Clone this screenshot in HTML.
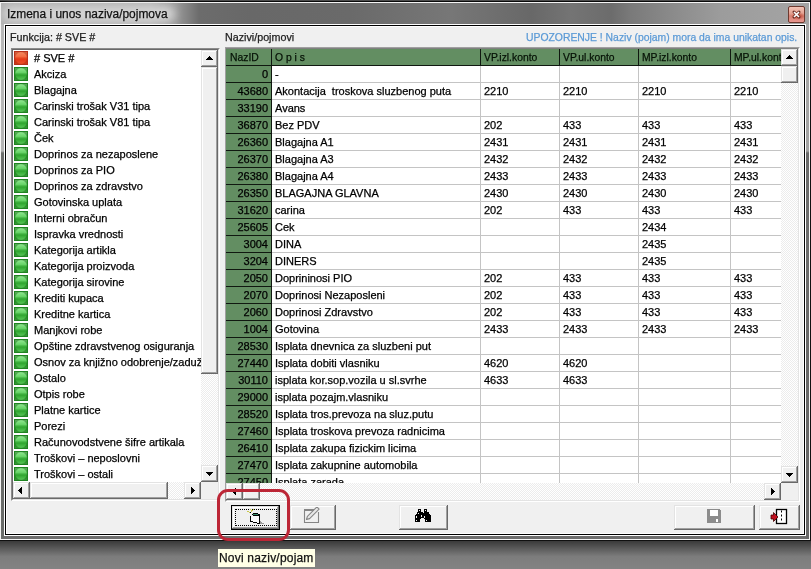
<!DOCTYPE html><html><head><meta charset="utf-8"><style>
*{margin:0;padding:0;box-sizing:border-box}
html,body{width:811px;height:569px;overflow:hidden;-webkit-font-smoothing:antialiased;background:#6a6a6a;font-family:"Liberation Sans",sans-serif;font-size:11px;color:#000}
.a{position:absolute}
.t{will-change:transform}
#root{-webkit-text-stroke:0.25px currentColor}
.ic{position:absolute;left:0;top:0;width:14px;height:14px}
.red{border:1px solid #b8301a;background:radial-gradient(circle at 50% 50%,rgba(0,0,0,0) 62%,rgba(140,20,0,.35) 74%),linear-gradient(#f58a60 0%,#f26c42 38%,#e84a24 50%,#e43a18 60%,#ee5028 100%)}
.grn{border:1px solid #1e8420;background:radial-gradient(circle at 50% 50%,rgba(0,0,0,0) 62%,rgba(0,70,0,.38) 74%),linear-gradient(#90e890 0%,#66d266 38%,#40b240 50%,#30a630 60%,#58c858 100%)}
.b3{position:absolute;background:#f0f0f0;box-shadow:inset -1px -1px 0 #696969,inset 1px 1px 0 #e3e3e3,inset -2px -2px 0 #a0a0a0,inset 2px 2px 0 #fff}
.trk{position:absolute;background:repeating-conic-gradient(#fff 0 25%,#ececec 0 50%) 0 0/2px 2px}
</style></head><body><div id="root" style="position:absolute;left:0;top:0;width:811px;height:569px;will-change:transform">

<div class="a" style="left:0;top:0;width:811px;height:1px;background:#4c4c4c"></div>
<div class="a" style="left:0;top:1px;width:811px;height:1px;background:#0a0a0a"></div>
<div class="a" style="left:810px;top:0;width:1px;height:569px;background:#111"></div>
<div class="a" style="left:0;top:540px;width:811px;height:1px;background:#101010"></div>
<div class="a" style="left:0;top:541px;width:811px;height:28px;background:linear-gradient(#3a3a3a,#7c7c7c 55%,#838383)"></div>
<div class="a" style="left:0;top:2px;width:810px;height:538px;background:#6e6e6e;border:1px solid #f4f4f4"></div>
<div class="a" style="left:1px;top:3px;width:808px;height:21px;background:linear-gradient(90deg,#b0b0b0 0,#b4b4b4 150px,#9a9a9a 175px,#6c6c6c 198px,#686868 250px,#6a6a6a 350px,#777777 450px,#686868 530px,#747474 570px,#6c6c6c 610px,#7a7a7a 630px,#8a8a8a 670px,#9c9c9c 720px,#a0a0a0 760px,#a4a4a4 808px)"></div>
<div class="a" style="left:3px;top:6px;width:172px;height:16px;background:#d4d4d4;border-radius:8px;filter:blur(4px)"></div>
<div class="a" style="left:1px;top:24px;width:3px;height:515px;background:linear-gradient(#b8b8b8,#b4b4b4 127px,#6c6e6c 129px,#6a6c6a)"></div>
<div class="a" style="left:806px;top:24px;width:3px;height:515px;background:linear-gradient(#a6a6a6,#a2a2a2 127px,#6a6a6a 129px,#686868)"></div>
<div class="a" style="left:7px;top:6px;font-size:12.5px;line-height:17px;color:#101010;white-space:nowrap;transform-origin:0 0;transform:scaleX(0.955)">Izmena i unos naziva/pojmova</div>
<div class="a" style="left:788px;top:6px;width:17px;height:17px;border:1px solid #6e3a30;border-radius:2px;background:radial-gradient(ellipse 7px 4px at 60% 60%,rgba(170,40,20,.75),rgba(170,40,20,0)),linear-gradient(#f2c4b6,#e4a090 45%,#d88072 60%,#e8968e)"></div>
<svg class="a" style="left:788px;top:6px" width="17" height="17" viewBox="0 0 17 17"><path d="M6 6 L11 11 M11 6 L6 11" stroke="#6a2a20" stroke-width="3" stroke-linecap="round"/><path d="M6 6 L11 11 M11 6 L6 11" stroke="#fff" stroke-width="1.7"/></svg>
<div class="a" style="left:4px;top:24px;width:802px;height:512px;border:1px solid #fff"></div>
<div class="a" style="left:5px;top:25px;width:800px;height:510px;border:1px solid #000"></div>
<div class="a" style="left:6px;top:26px;width:798px;height:508px;border:1px solid #fff;background:#f0f0f0"></div>
<div class="a" style="left:10px;top:31px;line-height:13px;white-space:nowrap;color:#202020;transform-origin:0 0;transform:scaleX(0.975)">Funkcija: # SVE #</div>
<div class="a" style="left:225px;top:31px;line-height:13px;white-space:nowrap;color:#202020;transform-origin:0 0;transform:scaleX(0.975)">Nazivi/pojmovi</div>
<div class="a" style="left:526px;top:31px;line-height:13px;white-space:nowrap;color:#5b9ad6;transform-origin:0 0;transform:scaleX(0.944)">UPOZORENJE ! Naziv (pojam) mora da ima unikatan opis.</div>
<div class="a" style="left:11px;top:48px;width:209px;height:453px;border-top:1px solid #8c8c8c;border-left:1px solid #8c8c8c;border-right:1px solid #fff;border-bottom:1px solid #fff"></div>
<div class="a" style="left:12px;top:49px;width:207px;height:451px;border-top:1px solid #696969;border-left:1px solid #696969;border-right:1px solid #e3e3e3;border-bottom:1px solid #e3e3e3;background:#fff"></div>
<div class="a" style="left:13px;top:50px;width:188px;height:432px;overflow:hidden">
<div class="a" style="left:1px;top:1px;width:14px;height:14px" ><div class="ic red"></div></div>
<div class="a" style="left:21px;top:0px;line-height:16px;white-space:nowrap"># SVE #</div>
<div class="a" style="left:1px;top:17px;width:14px;height:14px" ><div class="ic grn"></div></div>
<div class="a" style="left:21px;top:16px;line-height:16px;white-space:nowrap">Akciza</div>
<div class="a" style="left:1px;top:33px;width:14px;height:14px" ><div class="ic grn"></div></div>
<div class="a" style="left:21px;top:32px;line-height:16px;white-space:nowrap">Blagajna</div>
<div class="a" style="left:1px;top:49px;width:14px;height:14px" ><div class="ic grn"></div></div>
<div class="a" style="left:21px;top:48px;line-height:16px;white-space:nowrap">Carinski trošak V31 tipa</div>
<div class="a" style="left:1px;top:65px;width:14px;height:14px" ><div class="ic grn"></div></div>
<div class="a" style="left:21px;top:64px;line-height:16px;white-space:nowrap">Carinski trošak V81 tipa</div>
<div class="a" style="left:1px;top:81px;width:14px;height:14px" ><div class="ic grn"></div></div>
<div class="a" style="left:21px;top:80px;line-height:16px;white-space:nowrap">Ček</div>
<div class="a" style="left:1px;top:97px;width:14px;height:14px" ><div class="ic grn"></div></div>
<div class="a" style="left:21px;top:96px;line-height:16px;white-space:nowrap">Doprinos za nezaposlene</div>
<div class="a" style="left:1px;top:113px;width:14px;height:14px" ><div class="ic grn"></div></div>
<div class="a" style="left:21px;top:112px;line-height:16px;white-space:nowrap">Doprinos za PIO</div>
<div class="a" style="left:1px;top:129px;width:14px;height:14px" ><div class="ic grn"></div></div>
<div class="a" style="left:21px;top:128px;line-height:16px;white-space:nowrap">Doprinos za zdravstvo</div>
<div class="a" style="left:1px;top:145px;width:14px;height:14px" ><div class="ic grn"></div></div>
<div class="a" style="left:21px;top:144px;line-height:16px;white-space:nowrap">Gotovinska uplata</div>
<div class="a" style="left:1px;top:161px;width:14px;height:14px" ><div class="ic grn"></div></div>
<div class="a" style="left:21px;top:160px;line-height:16px;white-space:nowrap">Interni obračun</div>
<div class="a" style="left:1px;top:177px;width:14px;height:14px" ><div class="ic grn"></div></div>
<div class="a" style="left:21px;top:176px;line-height:16px;white-space:nowrap">Ispravka vrednosti</div>
<div class="a" style="left:1px;top:193px;width:14px;height:14px" ><div class="ic grn"></div></div>
<div class="a" style="left:21px;top:192px;line-height:16px;white-space:nowrap">Kategorija artikla</div>
<div class="a" style="left:1px;top:209px;width:14px;height:14px" ><div class="ic grn"></div></div>
<div class="a" style="left:21px;top:208px;line-height:16px;white-space:nowrap">Kategorija proizvoda</div>
<div class="a" style="left:1px;top:225px;width:14px;height:14px" ><div class="ic grn"></div></div>
<div class="a" style="left:21px;top:224px;line-height:16px;white-space:nowrap">Kategorija sirovine</div>
<div class="a" style="left:1px;top:241px;width:14px;height:14px" ><div class="ic grn"></div></div>
<div class="a" style="left:21px;top:240px;line-height:16px;white-space:nowrap">Krediti kupaca</div>
<div class="a" style="left:1px;top:257px;width:14px;height:14px" ><div class="ic grn"></div></div>
<div class="a" style="left:21px;top:256px;line-height:16px;white-space:nowrap">Kreditne kartica</div>
<div class="a" style="left:1px;top:273px;width:14px;height:14px" ><div class="ic grn"></div></div>
<div class="a" style="left:21px;top:272px;line-height:16px;white-space:nowrap">Manjkovi robe</div>
<div class="a" style="left:1px;top:289px;width:14px;height:14px" ><div class="ic grn"></div></div>
<div class="a" style="left:21px;top:288px;line-height:16px;white-space:nowrap">Opštine zdravstvenog osiguranja</div>
<div class="a" style="left:1px;top:305px;width:14px;height:14px" ><div class="ic grn"></div></div>
<div class="a" style="left:21px;top:304px;line-height:16px;white-space:nowrap">Osnov za knjižno odobrenje/zaduženje</div>
<div class="a" style="left:1px;top:321px;width:14px;height:14px" ><div class="ic grn"></div></div>
<div class="a" style="left:21px;top:320px;line-height:16px;white-space:nowrap">Ostalo</div>
<div class="a" style="left:1px;top:337px;width:14px;height:14px" ><div class="ic grn"></div></div>
<div class="a" style="left:21px;top:336px;line-height:16px;white-space:nowrap">Otpis robe</div>
<div class="a" style="left:1px;top:353px;width:14px;height:14px" ><div class="ic grn"></div></div>
<div class="a" style="left:21px;top:352px;line-height:16px;white-space:nowrap">Platne kartice</div>
<div class="a" style="left:1px;top:369px;width:14px;height:14px" ><div class="ic grn"></div></div>
<div class="a" style="left:21px;top:368px;line-height:16px;white-space:nowrap">Porezi</div>
<div class="a" style="left:1px;top:385px;width:14px;height:14px" ><div class="ic grn"></div></div>
<div class="a" style="left:21px;top:384px;line-height:16px;white-space:nowrap">Računovodstvene šifre artikala</div>
<div class="a" style="left:1px;top:401px;width:14px;height:14px" ><div class="ic grn"></div></div>
<div class="a" style="left:21px;top:400px;line-height:16px;white-space:nowrap">Troškovi – neposlovni</div>
<div class="a" style="left:1px;top:417px;width:14px;height:14px" ><div class="ic grn"></div></div>
<div class="a" style="left:21px;top:416px;line-height:16px;white-space:nowrap">Troškovi – ostali</div>
</div>
<div class="trk" style="left:201px;top:50px;width:17px;height:432px"></div>
<div class="b3" style="left:201px;top:50px;width:17px;height:17px"></div>
<svg class="a" style="left:206px;top:56px" width="7" height="4"><path d="M3.5 0 L7 4 L0 4Z" fill="#000" shape-rendering="crispEdges"/></svg>
<div class="b3" style="left:201px;top:67px;width:17px;height:307px"></div>
<div class="b3" style="left:201px;top:465px;width:17px;height:17px"></div>
<svg class="a" style="left:206px;top:472px" width="7" height="4"><path d="M0 0 L7 0 L3.5 4Z" fill="#000" shape-rendering="crispEdges"/></svg>
<div class="trk" style="left:13px;top:482px;width:188px;height:17px"></div>
<div class="b3" style="left:13px;top:482px;width:17px;height:17px"></div>
<svg class="a" style="left:18px;top:487px" width="4" height="7"><path d="M4 0 L4 7 L0 3.5Z" fill="#000" shape-rendering="crispEdges"/></svg>
<div class="b3" style="left:30px;top:482px;width:138px;height:17px"></div>
<div class="b3" style="left:184px;top:482px;width:17px;height:17px"></div>
<svg class="a" style="left:191px;top:487px" width="4" height="7"><path d="M0 0 L4 3.5 L0 7Z" fill="#000" shape-rendering="crispEdges"/></svg>
<div class="a" style="left:201px;top:482px;width:17px;height:17px;background:#f0f0f0"></div>
<div class="a" style="left:225px;top:47px;width:575px;height:455px;border-top:1px solid #a0a0a0;border-left:1px solid #a0a0a0;border-right:1px solid #fff;border-bottom:1px solid #fff"></div>
<div class="a" style="left:226px;top:48px;width:573px;height:453px;border-top:1px solid #808080;border-left:1px solid #808080;border-right:1px solid #e3e3e3;border-bottom:1px solid #e3e3e3;background:#f0f0f0"></div>
<div class="a" style="left:226px;top:49px;width:555px;height:434px;overflow:hidden;background:#fff">
<div class="a" style="left:0;top:0;width:560px;height:17px;background:#638e62;border-bottom:1px solid #101810"></div>
<div class="a" style="left:4px;top:0;line-height:16px;white-space:nowrap;color:#061206;transform-origin:0 0;transform:scaleX(0.94)">NazID</div>
<div class="a" style="left:49px;top:0;line-height:16px;white-space:nowrap;color:#061206;transform-origin:0 0;transform:scaleX(0.94)">O p i s</div>
<div class="a" style="left:258px;top:0;line-height:16px;white-space:nowrap;color:#061206;transform-origin:0 0;transform:scaleX(0.94)">VP.izl.konto</div>
<div class="a" style="left:337px;top:0;line-height:16px;white-space:nowrap;color:#061206;transform-origin:0 0;transform:scaleX(0.94)">VP.ul.konto</div>
<div class="a" style="left:416px;top:0;line-height:16px;white-space:nowrap;color:#061206;transform-origin:0 0;transform:scaleX(0.94)">MP.izl.konto</div>
<div class="a" style="left:508px;top:0;line-height:16px;white-space:nowrap;color:#061206;transform-origin:0 0;transform:scaleX(0.94)">MP.ul.konto</div>
<div class="a" style="left:0;top:17px;width:45px;height:420px;background:#638e62"></div>
<div class="a" style="left:0;top:33px;width:45px;height:1px;background:#101810"></div>
<div class="a" style="left:46px;top:33px;width:520px;height:1px;background:#c4c4c4"></div>
<div class="a" style="left:0;top:17px;width:42px;text-align:right;line-height:16px;color:#000">0</div>
<div class="a" style="left:49px;top:17px;line-height:16px;white-space:nowrap">-</div>
<div class="a" style="left:0;top:50px;width:45px;height:1px;background:#101810"></div>
<div class="a" style="left:46px;top:50px;width:520px;height:1px;background:#c4c4c4"></div>
<div class="a" style="left:0;top:34px;width:42px;text-align:right;line-height:16px;color:#000">43680</div>
<div class="a" style="left:49px;top:34px;line-height:16px;white-space:nowrap">Akontacija&nbsp; troskova sluzbenog puta</div>
<div class="a" style="left:258px;top:34px;line-height:16px;white-space:nowrap">2210</div>
<div class="a" style="left:337px;top:34px;line-height:16px;white-space:nowrap">2210</div>
<div class="a" style="left:416px;top:34px;line-height:16px;white-space:nowrap">2210</div>
<div class="a" style="left:508px;top:34px;line-height:16px;white-space:nowrap">2210</div>
<div class="a" style="left:0;top:67px;width:45px;height:1px;background:#101810"></div>
<div class="a" style="left:46px;top:67px;width:520px;height:1px;background:#c4c4c4"></div>
<div class="a" style="left:0;top:51px;width:42px;text-align:right;line-height:16px;color:#000">33190</div>
<div class="a" style="left:49px;top:51px;line-height:16px;white-space:nowrap">Avans</div>
<div class="a" style="left:0;top:84px;width:45px;height:1px;background:#101810"></div>
<div class="a" style="left:46px;top:84px;width:520px;height:1px;background:#c4c4c4"></div>
<div class="a" style="left:0;top:68px;width:42px;text-align:right;line-height:16px;color:#000">36870</div>
<div class="a" style="left:49px;top:68px;line-height:16px;white-space:nowrap">Bez PDV</div>
<div class="a" style="left:258px;top:68px;line-height:16px;white-space:nowrap">202</div>
<div class="a" style="left:337px;top:68px;line-height:16px;white-space:nowrap">433</div>
<div class="a" style="left:416px;top:68px;line-height:16px;white-space:nowrap">433</div>
<div class="a" style="left:508px;top:68px;line-height:16px;white-space:nowrap">433</div>
<div class="a" style="left:0;top:101px;width:45px;height:1px;background:#101810"></div>
<div class="a" style="left:46px;top:101px;width:520px;height:1px;background:#c4c4c4"></div>
<div class="a" style="left:0;top:85px;width:42px;text-align:right;line-height:16px;color:#000">26360</div>
<div class="a" style="left:49px;top:85px;line-height:16px;white-space:nowrap">Blagajna A1</div>
<div class="a" style="left:258px;top:85px;line-height:16px;white-space:nowrap">2431</div>
<div class="a" style="left:337px;top:85px;line-height:16px;white-space:nowrap">2431</div>
<div class="a" style="left:416px;top:85px;line-height:16px;white-space:nowrap">2431</div>
<div class="a" style="left:508px;top:85px;line-height:16px;white-space:nowrap">2431</div>
<div class="a" style="left:0;top:118px;width:45px;height:1px;background:#101810"></div>
<div class="a" style="left:46px;top:118px;width:520px;height:1px;background:#c4c4c4"></div>
<div class="a" style="left:0;top:102px;width:42px;text-align:right;line-height:16px;color:#000">26370</div>
<div class="a" style="left:49px;top:102px;line-height:16px;white-space:nowrap">Blagajna A3</div>
<div class="a" style="left:258px;top:102px;line-height:16px;white-space:nowrap">2432</div>
<div class="a" style="left:337px;top:102px;line-height:16px;white-space:nowrap">2432</div>
<div class="a" style="left:416px;top:102px;line-height:16px;white-space:nowrap">2432</div>
<div class="a" style="left:508px;top:102px;line-height:16px;white-space:nowrap">2432</div>
<div class="a" style="left:0;top:135px;width:45px;height:1px;background:#101810"></div>
<div class="a" style="left:46px;top:135px;width:520px;height:1px;background:#c4c4c4"></div>
<div class="a" style="left:0;top:119px;width:42px;text-align:right;line-height:16px;color:#000">26380</div>
<div class="a" style="left:49px;top:119px;line-height:16px;white-space:nowrap">Blagajna A4</div>
<div class="a" style="left:258px;top:119px;line-height:16px;white-space:nowrap">2433</div>
<div class="a" style="left:337px;top:119px;line-height:16px;white-space:nowrap">2433</div>
<div class="a" style="left:416px;top:119px;line-height:16px;white-space:nowrap">2433</div>
<div class="a" style="left:508px;top:119px;line-height:16px;white-space:nowrap">2433</div>
<div class="a" style="left:0;top:152px;width:45px;height:1px;background:#101810"></div>
<div class="a" style="left:46px;top:152px;width:520px;height:1px;background:#c4c4c4"></div>
<div class="a" style="left:0;top:136px;width:42px;text-align:right;line-height:16px;color:#000">26350</div>
<div class="a" style="left:49px;top:136px;line-height:16px;white-space:nowrap">BLAGAJNA GLAVNA</div>
<div class="a" style="left:258px;top:136px;line-height:16px;white-space:nowrap">2430</div>
<div class="a" style="left:337px;top:136px;line-height:16px;white-space:nowrap">2430</div>
<div class="a" style="left:416px;top:136px;line-height:16px;white-space:nowrap">2430</div>
<div class="a" style="left:508px;top:136px;line-height:16px;white-space:nowrap">2430</div>
<div class="a" style="left:0;top:169px;width:45px;height:1px;background:#101810"></div>
<div class="a" style="left:46px;top:169px;width:520px;height:1px;background:#c4c4c4"></div>
<div class="a" style="left:0;top:153px;width:42px;text-align:right;line-height:16px;color:#000">31620</div>
<div class="a" style="left:49px;top:153px;line-height:16px;white-space:nowrap">carina</div>
<div class="a" style="left:258px;top:153px;line-height:16px;white-space:nowrap">202</div>
<div class="a" style="left:337px;top:153px;line-height:16px;white-space:nowrap">433</div>
<div class="a" style="left:416px;top:153px;line-height:16px;white-space:nowrap">433</div>
<div class="a" style="left:508px;top:153px;line-height:16px;white-space:nowrap">433</div>
<div class="a" style="left:0;top:186px;width:45px;height:1px;background:#101810"></div>
<div class="a" style="left:46px;top:186px;width:520px;height:1px;background:#c4c4c4"></div>
<div class="a" style="left:0;top:170px;width:42px;text-align:right;line-height:16px;color:#000">25605</div>
<div class="a" style="left:49px;top:170px;line-height:16px;white-space:nowrap">Cek</div>
<div class="a" style="left:416px;top:170px;line-height:16px;white-space:nowrap">2434</div>
<div class="a" style="left:0;top:203px;width:45px;height:1px;background:#101810"></div>
<div class="a" style="left:46px;top:203px;width:520px;height:1px;background:#c4c4c4"></div>
<div class="a" style="left:0;top:187px;width:42px;text-align:right;line-height:16px;color:#000">3004</div>
<div class="a" style="left:49px;top:187px;line-height:16px;white-space:nowrap">DINA</div>
<div class="a" style="left:416px;top:187px;line-height:16px;white-space:nowrap">2435</div>
<div class="a" style="left:0;top:220px;width:45px;height:1px;background:#101810"></div>
<div class="a" style="left:46px;top:220px;width:520px;height:1px;background:#c4c4c4"></div>
<div class="a" style="left:0;top:204px;width:42px;text-align:right;line-height:16px;color:#000">3204</div>
<div class="a" style="left:49px;top:204px;line-height:16px;white-space:nowrap">DINERS</div>
<div class="a" style="left:416px;top:204px;line-height:16px;white-space:nowrap">2435</div>
<div class="a" style="left:0;top:237px;width:45px;height:1px;background:#101810"></div>
<div class="a" style="left:46px;top:237px;width:520px;height:1px;background:#c4c4c4"></div>
<div class="a" style="left:0;top:221px;width:42px;text-align:right;line-height:16px;color:#000">2050</div>
<div class="a" style="left:49px;top:221px;line-height:16px;white-space:nowrap">Doprininosi PIO</div>
<div class="a" style="left:258px;top:221px;line-height:16px;white-space:nowrap">202</div>
<div class="a" style="left:337px;top:221px;line-height:16px;white-space:nowrap">433</div>
<div class="a" style="left:416px;top:221px;line-height:16px;white-space:nowrap">433</div>
<div class="a" style="left:508px;top:221px;line-height:16px;white-space:nowrap">433</div>
<div class="a" style="left:0;top:254px;width:45px;height:1px;background:#101810"></div>
<div class="a" style="left:46px;top:254px;width:520px;height:1px;background:#c4c4c4"></div>
<div class="a" style="left:0;top:238px;width:42px;text-align:right;line-height:16px;color:#000">2070</div>
<div class="a" style="left:49px;top:238px;line-height:16px;white-space:nowrap">Doprinosi Nezaposleni</div>
<div class="a" style="left:258px;top:238px;line-height:16px;white-space:nowrap">202</div>
<div class="a" style="left:337px;top:238px;line-height:16px;white-space:nowrap">433</div>
<div class="a" style="left:416px;top:238px;line-height:16px;white-space:nowrap">433</div>
<div class="a" style="left:508px;top:238px;line-height:16px;white-space:nowrap">433</div>
<div class="a" style="left:0;top:271px;width:45px;height:1px;background:#101810"></div>
<div class="a" style="left:46px;top:271px;width:520px;height:1px;background:#c4c4c4"></div>
<div class="a" style="left:0;top:255px;width:42px;text-align:right;line-height:16px;color:#000">2060</div>
<div class="a" style="left:49px;top:255px;line-height:16px;white-space:nowrap">Doprinosi Zdravstvo</div>
<div class="a" style="left:258px;top:255px;line-height:16px;white-space:nowrap">202</div>
<div class="a" style="left:337px;top:255px;line-height:16px;white-space:nowrap">433</div>
<div class="a" style="left:416px;top:255px;line-height:16px;white-space:nowrap">433</div>
<div class="a" style="left:508px;top:255px;line-height:16px;white-space:nowrap">433</div>
<div class="a" style="left:0;top:288px;width:45px;height:1px;background:#101810"></div>
<div class="a" style="left:46px;top:288px;width:520px;height:1px;background:#c4c4c4"></div>
<div class="a" style="left:0;top:272px;width:42px;text-align:right;line-height:16px;color:#000">1004</div>
<div class="a" style="left:49px;top:272px;line-height:16px;white-space:nowrap">Gotovina</div>
<div class="a" style="left:258px;top:272px;line-height:16px;white-space:nowrap">2433</div>
<div class="a" style="left:337px;top:272px;line-height:16px;white-space:nowrap">2433</div>
<div class="a" style="left:416px;top:272px;line-height:16px;white-space:nowrap">2433</div>
<div class="a" style="left:508px;top:272px;line-height:16px;white-space:nowrap">2433</div>
<div class="a" style="left:0;top:305px;width:45px;height:1px;background:#101810"></div>
<div class="a" style="left:46px;top:305px;width:520px;height:1px;background:#c4c4c4"></div>
<div class="a" style="left:0;top:289px;width:42px;text-align:right;line-height:16px;color:#000">28530</div>
<div class="a" style="left:49px;top:289px;line-height:16px;white-space:nowrap">Isplata dnevnica za sluzbeni put</div>
<div class="a" style="left:0;top:322px;width:45px;height:1px;background:#101810"></div>
<div class="a" style="left:46px;top:322px;width:520px;height:1px;background:#c4c4c4"></div>
<div class="a" style="left:0;top:306px;width:42px;text-align:right;line-height:16px;color:#000">27440</div>
<div class="a" style="left:49px;top:306px;line-height:16px;white-space:nowrap">Isplata dobiti vlasniku</div>
<div class="a" style="left:258px;top:306px;line-height:16px;white-space:nowrap">4620</div>
<div class="a" style="left:337px;top:306px;line-height:16px;white-space:nowrap">4620</div>
<div class="a" style="left:0;top:339px;width:45px;height:1px;background:#101810"></div>
<div class="a" style="left:46px;top:339px;width:520px;height:1px;background:#c4c4c4"></div>
<div class="a" style="left:0;top:323px;width:42px;text-align:right;line-height:16px;color:#000">30110</div>
<div class="a" style="left:49px;top:323px;line-height:16px;white-space:nowrap">isplata kor.sop.vozila u sl.svrhe</div>
<div class="a" style="left:258px;top:323px;line-height:16px;white-space:nowrap">4633</div>
<div class="a" style="left:337px;top:323px;line-height:16px;white-space:nowrap">4633</div>
<div class="a" style="left:0;top:356px;width:45px;height:1px;background:#101810"></div>
<div class="a" style="left:46px;top:356px;width:520px;height:1px;background:#c4c4c4"></div>
<div class="a" style="left:0;top:340px;width:42px;text-align:right;line-height:16px;color:#000">29000</div>
<div class="a" style="left:49px;top:340px;line-height:16px;white-space:nowrap">isplata pozajm.vlasniku</div>
<div class="a" style="left:0;top:373px;width:45px;height:1px;background:#101810"></div>
<div class="a" style="left:46px;top:373px;width:520px;height:1px;background:#c4c4c4"></div>
<div class="a" style="left:0;top:357px;width:42px;text-align:right;line-height:16px;color:#000">28520</div>
<div class="a" style="left:49px;top:357px;line-height:16px;white-space:nowrap">Isplata tros.prevoza na sluz.putu</div>
<div class="a" style="left:0;top:390px;width:45px;height:1px;background:#101810"></div>
<div class="a" style="left:46px;top:390px;width:520px;height:1px;background:#c4c4c4"></div>
<div class="a" style="left:0;top:374px;width:42px;text-align:right;line-height:16px;color:#000">27460</div>
<div class="a" style="left:49px;top:374px;line-height:16px;white-space:nowrap">Isplata troskova prevoza radnicima</div>
<div class="a" style="left:0;top:407px;width:45px;height:1px;background:#101810"></div>
<div class="a" style="left:46px;top:407px;width:520px;height:1px;background:#c4c4c4"></div>
<div class="a" style="left:0;top:391px;width:42px;text-align:right;line-height:16px;color:#000">26410</div>
<div class="a" style="left:49px;top:391px;line-height:16px;white-space:nowrap">Isplata zakupa fizickim licima</div>
<div class="a" style="left:0;top:424px;width:45px;height:1px;background:#101810"></div>
<div class="a" style="left:46px;top:424px;width:520px;height:1px;background:#c4c4c4"></div>
<div class="a" style="left:0;top:408px;width:42px;text-align:right;line-height:16px;color:#000">27470</div>
<div class="a" style="left:49px;top:408px;line-height:16px;white-space:nowrap">Isplata zakupnine automobila</div>
<div class="a" style="left:0;top:441px;width:45px;height:1px;background:#101810"></div>
<div class="a" style="left:46px;top:441px;width:520px;height:1px;background:#c4c4c4"></div>
<div class="a" style="left:0;top:425px;width:42px;text-align:right;line-height:16px;color:#000">27450</div>
<div class="a" style="left:49px;top:425px;line-height:16px;white-space:nowrap">Isplata zarada</div>
<div class="a" style="left:45px;top:0;width:1px;height:434px;background:#101810"></div>
<div class="a" style="left:254px;top:17px;width:1px;height:434px;background:#c4c4c4"></div>
<div class="a" style="left:254px;top:0;width:1px;height:17px;background:#101810"></div>
<div class="a" style="left:333px;top:17px;width:1px;height:434px;background:#c4c4c4"></div>
<div class="a" style="left:333px;top:0;width:1px;height:17px;background:#101810"></div>
<div class="a" style="left:412px;top:17px;width:1px;height:434px;background:#c4c4c4"></div>
<div class="a" style="left:412px;top:0;width:1px;height:17px;background:#101810"></div>
<div class="a" style="left:504px;top:17px;width:1px;height:434px;background:#c4c4c4"></div>
<div class="a" style="left:504px;top:0;width:1px;height:17px;background:#101810"></div>
</div>
<div class="trk" style="left:781px;top:49px;width:17px;height:434px"></div>
<div class="b3" style="left:781px;top:49px;width:17px;height:17px"></div>
<svg class="a" style="left:786px;top:55px" width="7" height="4"><path d="M3.5 0 L7 4 L0 4Z" fill="#000" shape-rendering="crispEdges"/></svg>
<div class="b3" style="left:781px;top:66px;width:17px;height:17px"></div>
<div class="b3" style="left:781px;top:466px;width:17px;height:17px"></div>
<svg class="a" style="left:786px;top:473px" width="7" height="4"><path d="M0 0 L7 0 L3.5 4Z" fill="#000" shape-rendering="crispEdges"/></svg>
<div class="trk" style="left:226px;top:483px;width:555px;height:17px"></div>
<div class="b3" style="left:226px;top:483px;width:17px;height:17px"></div>
<svg class="a" style="left:232px;top:488px" width="4" height="7"><path d="M4 0 L4 7 L0 3.5Z" fill="#000" shape-rendering="crispEdges"/></svg>
<div class="b3" style="left:243px;top:483px;width:17px;height:17px"></div>
<div class="b3" style="left:764px;top:483px;width:17px;height:17px"></div>
<svg class="a" style="left:771px;top:488px" width="4" height="7"><path d="M0 0 L4 3.5 L0 7Z" fill="#000" shape-rendering="crispEdges"/></svg>
<div class="a" style="left:781px;top:483px;width:17px;height:17px;background:#f0f0f0"></div>
<div class="a" style="left:231px;top:505px;width:49px;height:25px;border:1px solid #000"></div>
<div class="b3" style="left:232px;top:506px;width:47px;height:23px"></div>
<div class="a" style="left:235px;top:509px;width:42px;height:17px;border:1px dotted #000"></div>
<div class="b3" style="left:290px;top:505px;width:46px;height:25px"></div>
<div class="b3" style="left:399px;top:505px;width:49px;height:25px"></div>
<div class="b3" style="left:674px;top:505px;width:81px;height:25px"></div>
<div class="b3" style="left:759px;top:505px;width:41px;height:25px"></div>
<svg class="a" style="left:244px;top:506px" width="20" height="18" shape-rendering="crispEdges"><rect x="6" y="3" width="1" height="1" fill="#c8c850"/><rect x="9" y="3" width="1" height="1" fill="#c8c850"/><rect x="7" y="4" width="1" height="1" fill="#c8c850"/><rect x="8" y="4" width="1" height="1" fill="#c8c850"/><rect x="3" y="5" width="1" height="1" fill="#c8c850"/><rect x="4" y="5" width="1" height="1" fill="#c8c850"/><rect x="7" y="5" width="1" height="1" fill="#c8c850"/><rect x="5" y="6" width="1" height="1" fill="#c8c850"/><rect x="6" y="6" width="1" height="1" fill="#000"/><rect x="9" y="7" width="1" height="1" fill="#000"/><rect x="10" y="7" width="1" height="1" fill="#000"/><rect x="11" y="7" width="1" height="1" fill="#000"/><rect x="12" y="7" width="1" height="1" fill="#000"/><rect x="13" y="7" width="1" height="1" fill="#000"/><rect x="8" y="8" width="1" height="1" fill="#000"/><rect x="9" y="8" width="1" height="1" fill="#3a8a6a"/><rect x="10" y="8" width="1" height="1" fill="#3a8a6a"/><rect x="11" y="8" width="1" height="1" fill="#3a8a6a"/><rect x="12" y="8" width="1" height="1" fill="#3a8a6a"/><rect x="13" y="8" width="1" height="1" fill="#3a8a6a"/><rect x="14" y="8" width="1" height="1" fill="#000"/><rect x="15" y="8" width="1" height="1" fill="#000"/><rect x="9" y="9" width="1" height="1" fill="#000"/><rect x="10" y="9" width="1" height="1" fill="#000"/><rect x="11" y="9" width="1" height="1" fill="#000"/><rect x="12" y="9" width="1" height="1" fill="#000"/><rect x="13" y="9" width="1" height="1" fill="#000"/><rect x="14" y="9" width="1" height="1" fill="#000"/><rect x="15" y="9" width="1" height="1" fill="#000"/><rect x="6" y="10" width="1" height="1" fill="#000"/><rect x="7" y="10" width="1" height="1" fill="#fafafa"/><rect x="8" y="10" width="1" height="1" fill="#fafafa"/><rect x="9" y="10" width="1" height="1" fill="#fafafa"/><rect x="10" y="10" width="1" height="1" fill="#fafafa"/><rect x="11" y="10" width="1" height="1" fill="#fafafa"/><rect x="12" y="10" width="1" height="1" fill="#fafafa"/><rect x="13" y="10" width="1" height="1" fill="#fafafa"/><rect x="14" y="10" width="1" height="1" fill="#fafafa"/><rect x="15" y="10" width="1" height="1" fill="#000"/><rect x="6" y="11" width="1" height="1" fill="#000"/><rect x="7" y="11" width="1" height="1" fill="#fafafa"/><rect x="8" y="11" width="1" height="1" fill="#fafafa"/><rect x="9" y="11" width="1" height="1" fill="#fafafa"/><rect x="10" y="11" width="1" height="1" fill="#fafafa"/><rect x="11" y="11" width="1" height="1" fill="#fafafa"/><rect x="12" y="11" width="1" height="1" fill="#fafafa"/><rect x="13" y="11" width="1" height="1" fill="#fafafa"/><rect x="14" y="11" width="1" height="1" fill="#fafafa"/><rect x="15" y="11" width="1" height="1" fill="#000"/><rect x="6" y="12" width="1" height="1" fill="#000"/><rect x="7" y="12" width="1" height="1" fill="#fafafa"/><rect x="8" y="12" width="1" height="1" fill="#fafafa"/><rect x="9" y="12" width="1" height="1" fill="#fafafa"/><rect x="10" y="12" width="1" height="1" fill="#fafafa"/><rect x="11" y="12" width="1" height="1" fill="#fafafa"/><rect x="12" y="12" width="1" height="1" fill="#fafafa"/><rect x="13" y="12" width="1" height="1" fill="#fafafa"/><rect x="14" y="12" width="1" height="1" fill="#fafafa"/><rect x="15" y="12" width="1" height="1" fill="#000"/><rect x="6" y="13" width="1" height="1" fill="#000"/><rect x="7" y="13" width="1" height="1" fill="#fafafa"/><rect x="8" y="13" width="1" height="1" fill="#fafafa"/><rect x="9" y="13" width="1" height="1" fill="#fafafa"/><rect x="10" y="13" width="1" height="1" fill="#fafafa"/><rect x="11" y="13" width="1" height="1" fill="#fafafa"/><rect x="12" y="13" width="1" height="1" fill="#fafafa"/><rect x="13" y="13" width="1" height="1" fill="#fafafa"/><rect x="14" y="13" width="1" height="1" fill="#fafafa"/><rect x="15" y="13" width="1" height="1" fill="#000"/><rect x="6" y="14" width="1" height="1" fill="#000"/><rect x="7" y="14" width="1" height="1" fill="#fafafa"/><rect x="8" y="14" width="1" height="1" fill="#fafafa"/><rect x="9" y="14" width="1" height="1" fill="#fafafa"/><rect x="10" y="14" width="1" height="1" fill="#fafafa"/><rect x="11" y="14" width="1" height="1" fill="#fafafa"/><rect x="12" y="14" width="1" height="1" fill="#fafafa"/><rect x="13" y="14" width="1" height="1" fill="#fafafa"/><rect x="14" y="14" width="1" height="1" fill="#fafafa"/><rect x="15" y="14" width="1" height="1" fill="#000"/><rect x="6" y="15" width="1" height="1" fill="#000"/><rect x="7" y="15" width="1" height="1" fill="#000"/><rect x="8" y="15" width="1" height="1" fill="#000"/><rect x="9" y="15" width="1" height="1" fill="#fafafa"/><rect x="10" y="15" width="1" height="1" fill="#fafafa"/><rect x="11" y="15" width="1" height="1" fill="#fafafa"/><rect x="12" y="15" width="1" height="1" fill="#fafafa"/><rect x="13" y="15" width="1" height="1" fill="#fafafa"/><rect x="14" y="15" width="1" height="1" fill="#fafafa"/><rect x="15" y="15" width="1" height="1" fill="#000"/><rect x="16" y="15" width="1" height="1" fill="#9a9a9a"/><rect x="9" y="16" width="1" height="1" fill="#000"/><rect x="10" y="16" width="1" height="1" fill="#000"/><rect x="11" y="16" width="1" height="1" fill="#000"/><rect x="12" y="16" width="1" height="1" fill="#000"/><rect x="13" y="16" width="1" height="1" fill="#fafafa"/><rect x="14" y="16" width="1" height="1" fill="#fafafa"/><rect x="15" y="16" width="1" height="1" fill="#000"/><rect x="16" y="16" width="1" height="1" fill="#9a9a9a"/><rect x="17" y="16" width="1" height="1" fill="#9a9a9a"/><rect x="13" y="17" width="1" height="1" fill="#000"/><rect x="14" y="17" width="1" height="1" fill="#000"/><rect x="15" y="17" width="1" height="1" fill="#000"/><rect x="16" y="17" width="1" height="1" fill="#9a9a9a"/><rect x="17" y="17" width="1" height="1" fill="#9a9a9a"/><rect x="18" y="17" width="1" height="1" fill="#9a9a9a"/><rect x="19" y="17" width="1" height="1" fill="#9a9a9a"/></svg>
<svg class="a" style="left:303px;top:507px" width="19" height="17" viewBox="0 0 19 17">
<path d="M1.5 3.5 L1.5 15.5 L15.5 15.5 L15.5 5" fill="none" stroke="#858585" stroke-width="1.1"/>
<path d="M1 3 L11 3" stroke="#858585" stroke-width="2"/>
<path d="M3.5 12.5 L4.4 9.4 L13.9 -0.1 L16.1 2.1 L6.6 11.6 Z" fill="#e8e8e8" stroke="#858585" stroke-width="1.1" stroke-linejoin="round"/>
</svg>
<svg class="a" style="left:415px;top:509px" width="16" height="13" shape-rendering="crispEdges"><rect x="3" y="0" width="1" height="1" fill="#000"/><rect x="4" y="0" width="1" height="1" fill="#000"/><rect x="5" y="0" width="1" height="1" fill="#000"/><rect x="9" y="0" width="1" height="1" fill="#000"/><rect x="10" y="0" width="1" height="1" fill="#000"/><rect x="11" y="0" width="1" height="1" fill="#000"/><rect x="3" y="1" width="1" height="1" fill="#000"/><rect x="5" y="1" width="1" height="1" fill="#000"/><rect x="9" y="1" width="1" height="1" fill="#000"/><rect x="11" y="1" width="1" height="1" fill="#000"/><rect x="3" y="2" width="1" height="1" fill="#000"/><rect x="4" y="2" width="1" height="1" fill="#000"/><rect x="5" y="2" width="1" height="1" fill="#000"/><rect x="9" y="2" width="1" height="1" fill="#000"/><rect x="10" y="2" width="1" height="1" fill="#000"/><rect x="11" y="2" width="1" height="1" fill="#000"/><rect x="2" y="3" width="1" height="1" fill="#000"/><rect x="3" y="3" width="1" height="1" fill="#000"/><rect x="4" y="3" width="1" height="1" fill="#000"/><rect x="5" y="3" width="1" height="1" fill="#000"/><rect x="6" y="3" width="1" height="1" fill="#000"/><rect x="7" y="3" width="1" height="1" fill="#000"/><rect x="9" y="3" width="1" height="1" fill="#000"/><rect x="10" y="3" width="1" height="1" fill="#000"/><rect x="11" y="3" width="1" height="1" fill="#000"/><rect x="12" y="3" width="1" height="1" fill="#000"/><rect x="13" y="3" width="1" height="1" fill="#000"/><rect x="2" y="4" width="1" height="1" fill="#000"/><rect x="4" y="4" width="1" height="1" fill="#000"/><rect x="5" y="4" width="1" height="1" fill="#000"/><rect x="6" y="4" width="1" height="1" fill="#000"/><rect x="7" y="4" width="1" height="1" fill="#000"/><rect x="8" y="4" width="1" height="1" fill="#000"/><rect x="9" y="4" width="1" height="1" fill="#000"/><rect x="10" y="4" width="1" height="1" fill="#000"/><rect x="11" y="4" width="1" height="1" fill="#000"/><rect x="12" y="4" width="1" height="1" fill="#000"/><rect x="13" y="4" width="1" height="1" fill="#000"/><rect x="1" y="5" width="1" height="1" fill="#000"/><rect x="2" y="5" width="1" height="1" fill="#000"/><rect x="3" y="5" width="1" height="1" fill="#000"/><rect x="4" y="5" width="1" height="1" fill="#000"/><rect x="5" y="5" width="1" height="1" fill="#000"/><rect x="6" y="5" width="1" height="1" fill="#000"/><rect x="7" y="5" width="1" height="1" fill="#000"/><rect x="8" y="5" width="1" height="1" fill="#000"/><rect x="9" y="5" width="1" height="1" fill="#000"/><rect x="10" y="5" width="1" height="1" fill="#000"/><rect x="11" y="5" width="1" height="1" fill="#000"/><rect x="12" y="5" width="1" height="1" fill="#000"/><rect x="13" y="5" width="1" height="1" fill="#000"/><rect x="14" y="5" width="1" height="1" fill="#000"/><rect x="0" y="6" width="1" height="1" fill="#000"/><rect x="1" y="6" width="1" height="1" fill="#000"/><rect x="2" y="6" width="1" height="1" fill="#000"/><rect x="3" y="6" width="1" height="1" fill="#000"/><rect x="4" y="6" width="1" height="1" fill="#000"/><rect x="5" y="6" width="1" height="1" fill="#000"/><rect x="7" y="6" width="1" height="1" fill="#000"/><rect x="8" y="6" width="1" height="1" fill="#000"/><rect x="9" y="6" width="1" height="1" fill="#000"/><rect x="10" y="6" width="1" height="1" fill="#000"/><rect x="11" y="6" width="1" height="1" fill="#000"/><rect x="12" y="6" width="1" height="1" fill="#000"/><rect x="13" y="6" width="1" height="1" fill="#000"/><rect x="14" y="6" width="1" height="1" fill="#000"/><rect x="15" y="6" width="1" height="1" fill="#000"/><rect x="0" y="7" width="1" height="1" fill="#000"/><rect x="2" y="7" width="1" height="1" fill="#000"/><rect x="3" y="7" width="1" height="1" fill="#000"/><rect x="4" y="7" width="1" height="1" fill="#000"/><rect x="5" y="7" width="1" height="1" fill="#000"/><rect x="7" y="7" width="1" height="1" fill="#000"/><rect x="8" y="7" width="1" height="1" fill="#000"/><rect x="10" y="7" width="1" height="1" fill="#000"/><rect x="11" y="7" width="1" height="1" fill="#000"/><rect x="12" y="7" width="1" height="1" fill="#000"/><rect x="13" y="7" width="1" height="1" fill="#000"/><rect x="14" y="7" width="1" height="1" fill="#000"/><rect x="15" y="7" width="1" height="1" fill="#000"/><rect x="0" y="8" width="1" height="1" fill="#000"/><rect x="2" y="8" width="1" height="1" fill="#000"/><rect x="3" y="8" width="1" height="1" fill="#000"/><rect x="4" y="8" width="1" height="1" fill="#000"/><rect x="5" y="8" width="1" height="1" fill="#000"/><rect x="6" y="8" width="1" height="1" fill="#000"/><rect x="7" y="8" width="1" height="1" fill="#000"/><rect x="8" y="8" width="1" height="1" fill="#000"/><rect x="10" y="8" width="1" height="1" fill="#000"/><rect x="11" y="8" width="1" height="1" fill="#000"/><rect x="12" y="8" width="1" height="1" fill="#000"/><rect x="13" y="8" width="1" height="1" fill="#000"/><rect x="14" y="8" width="1" height="1" fill="#000"/><rect x="15" y="8" width="1" height="1" fill="#000"/><rect x="0" y="9" width="1" height="1" fill="#000"/><rect x="1" y="9" width="1" height="1" fill="#000"/><rect x="2" y="9" width="1" height="1" fill="#000"/><rect x="3" y="9" width="1" height="1" fill="#000"/><rect x="4" y="9" width="1" height="1" fill="#000"/><rect x="5" y="9" width="1" height="1" fill="#000"/><rect x="9" y="9" width="1" height="1" fill="#000"/><rect x="10" y="9" width="1" height="1" fill="#000"/><rect x="11" y="9" width="1" height="1" fill="#000"/><rect x="12" y="9" width="1" height="1" fill="#000"/><rect x="13" y="9" width="1" height="1" fill="#000"/><rect x="14" y="9" width="1" height="1" fill="#000"/><rect x="15" y="9" width="1" height="1" fill="#000"/><rect x="0" y="10" width="1" height="1" fill="#000"/><rect x="1" y="10" width="1" height="1" fill="#000"/><rect x="2" y="10" width="1" height="1" fill="#000"/><rect x="3" y="10" width="1" height="1" fill="#000"/><rect x="4" y="10" width="1" height="1" fill="#000"/><rect x="10" y="10" width="1" height="1" fill="#000"/><rect x="11" y="10" width="1" height="1" fill="#000"/><rect x="12" y="10" width="1" height="1" fill="#000"/><rect x="13" y="10" width="1" height="1" fill="#000"/><rect x="14" y="10" width="1" height="1" fill="#000"/><rect x="15" y="10" width="1" height="1" fill="#000"/><rect x="0" y="11" width="1" height="1" fill="#000"/><rect x="2" y="11" width="1" height="1" fill="#000"/><rect x="3" y="11" width="1" height="1" fill="#000"/><rect x="4" y="11" width="1" height="1" fill="#000"/><rect x="10" y="11" width="1" height="1" fill="#000"/><rect x="12" y="11" width="1" height="1" fill="#000"/><rect x="13" y="11" width="1" height="1" fill="#000"/><rect x="14" y="11" width="1" height="1" fill="#000"/><rect x="15" y="11" width="1" height="1" fill="#000"/><rect x="0" y="12" width="1" height="1" fill="#000"/><rect x="1" y="12" width="1" height="1" fill="#000"/><rect x="2" y="12" width="1" height="1" fill="#000"/><rect x="3" y="12" width="1" height="1" fill="#000"/><rect x="4" y="12" width="1" height="1" fill="#000"/><rect x="10" y="12" width="1" height="1" fill="#000"/><rect x="11" y="12" width="1" height="1" fill="#000"/><rect x="12" y="12" width="1" height="1" fill="#000"/><rect x="13" y="12" width="1" height="1" fill="#000"/><rect x="14" y="12" width="1" height="1" fill="#000"/><rect x="15" y="12" width="1" height="1" fill="#000"/></svg>
<svg class="a" style="left:707px;top:509px" width="15" height="14" shape-rendering="crispEdges">
<rect x="0" y="0" width="14" height="14" fill="#8c8c8c"/>
<rect x="3" y="1" width="8" height="6" fill="#fff"/>
<rect x="9" y="10" width="2" height="3" fill="#fff"/>
<rect x="13" y="0" width="1" height="1" fill="#f0f0f0"/>
</svg>
<svg class="a" style="left:770px;top:508px" width="19" height="17" viewBox="0 0 19 17">
<rect x="6.5" y="1.5" width="10" height="14" fill="#fff" stroke="#000" stroke-width="1.3"/>
<path d="M11.5 2.5 L11.5 14.5" stroke="#000" stroke-width="1" stroke-dasharray="2 2"/>
<path d="M1 7 L3.5 7 L3.5 4.5 L8 9 L3.5 13.5 L3.5 11 L1 11 Z" fill="#c01020" stroke="#400" stroke-width="0.8"/>
</svg>
<div class="a" style="left:217px;top:489px;width:73px;height:52px;border:3px solid #bc2636;border-radius:11px"></div>
<div class="a" style="left:218px;top:549px;width:97px;height:18px;background:#ffffe6"></div>
<div class="a" style="left:219px;top:551px;font-size:12px;line-height:15px;letter-spacing:0.2px;white-space:nowrap;color:#111">Novi naziv/pojam</div>
</div></body></html>
